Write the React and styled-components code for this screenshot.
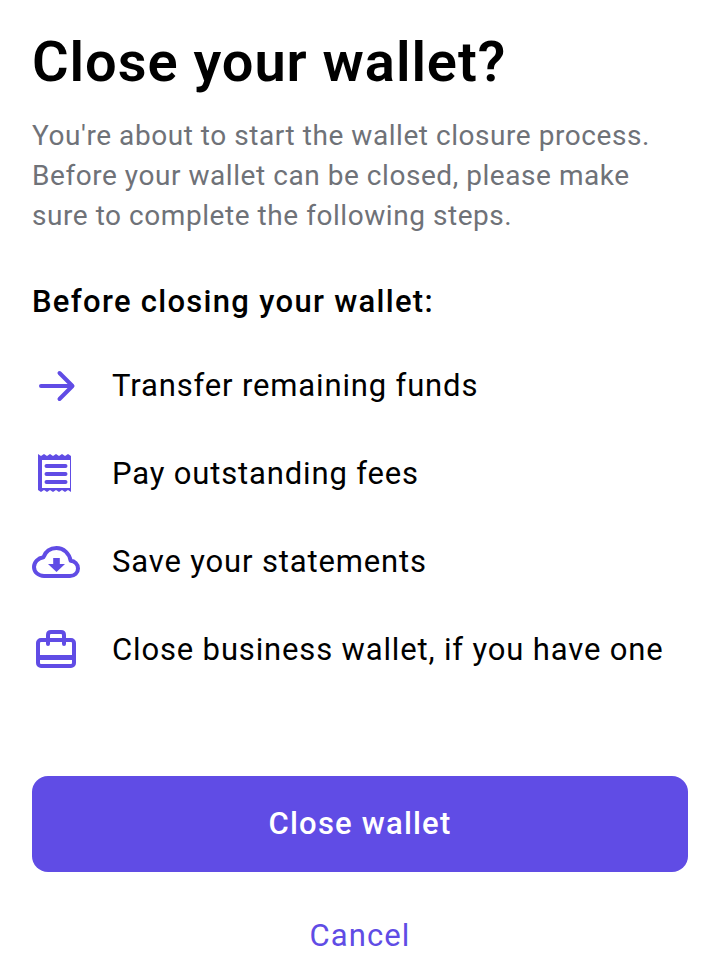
import React from 'react';
import styled, { createGlobalStyle } from 'styled-components';

const GlobalStyle = createGlobalStyle`
  html, body {
    background: #fff;
    margin: 0;
    padding: 0;
  }
  body {
    font-family: Roboto, "Liberation Sans", sans-serif;
  }
`;

const Page = styled.main`
  box-sizing: border-box;
  color: #000;
  display: flex;
  flex-direction: column;
  height: 969px;
  overflow: hidden;
  padding: 24px 32px 0;
  width: 720px;
`;

const Title = styled.h1`
  font-size: 56px;
  font-weight: 600;
  letter-spacing: 0.95px;
  line-height: 76px;
  margin: 0 0 16px;
`;

const Intro = styled.p`
  color: #6f7278;
  font-size: 28px;
  letter-spacing: 0.55px;
  line-height: 40px;
  margin: 0 0 46px;
`;

const Subtitle = styled.h2`
  font-size: 31px;
  font-weight: 500;
  letter-spacing: 1.3px;
  line-height: 40px;
  margin: 0 0 39px;
`;

const Steps = styled.ul`
  display: flex;
  flex-direction: column;
  gap: 40px;
  list-style: none;
  margin: 0 0 103px;
  padding: 0;
`;

const Step = styled.li`
  align-items: center;
  display: flex;
  font-size: 31px;
  gap: 32px;
  height: 48px;
  letter-spacing: 0.85px;
`;

const Icon = styled.svg.attrs({ viewBox: '0 0 48 48', fill: 'none' })`
  color: #604ce5;
  flex: none;
  height: 48px;
  width: 48px;
`;

const PrimaryButton = styled.button`
  background: #604ce5;
  border: 0;
  border-radius: 16px;
  color: #fff;
  font-family: inherit;
  font-size: 31px;
  font-weight: 500;
  height: 96px;
  letter-spacing: 1.2px;
  padding: 0 0 2px;
  width: 100%;
`;

const CancelButton = styled.button`
  background: none;
  border: 0;
  color: #604ce5;
  font-family: inherit;
  font-size: 31px;
  height: 40px;
  letter-spacing: 1.1px;
  margin-top: 43px;
  padding: 0;
`;

const ArrowIcon = () => (
  <Icon>
    <path
      d="M9 25h31M27.500 12l13 13-13 13"
      stroke="currentColor"
      strokeWidth="4"
      strokeLinecap="round"
      strokeLinejoin="round"
    />
  </Icon>
);

const ReceiptIcon = () => (
  <Icon>
    <path
      fillRule="evenodd"
      fill="currentColor"
      d="M6 5l3 2 3-2 3 2 3-2 3 2 3-2 3 2 3-2 3 2 3-2 3 2v36l-3-2-3 2-3-2-3 2-3-2-3 2-3-2-3 2-3-2-3 2-3-2V5zM10 11v28h28V11H10z"
    />
    <path
      d="M14.500 17h19M14.500 25h19M14.500 33h19"
      stroke="currentColor"
      strokeWidth="4"
      strokeLinecap="round"
    />
  </Icon>
);

const CloudIcon = () => (
  <Icon>
    <path
      d="M12 39h26c4.500 0 8-3.200 8-7.600 0-4.200-3.300-7.400-7.400-7.600C37.400 16.400 31.600 11 24.500 11c-6.200 0-11 3.600-13 9.200C6 21 2 25 2 30c0 5 4.400 9 10 9z"
      stroke="currentColor"
      strokeWidth="4"
      strokeLinejoin="round"
    />
    <path
      fill="currentColor"
      d="M21.200 21h6.600v6H33l-8.500 8-8.500-8h5.200v-6z"
    />
  </Icon>
);

const BriefcaseIcon = () => (
  <Icon>
    <rect x="6" y="15" width="36" height="26" rx="3" stroke="currentColor" strokeWidth="4" />
    <path d="M5 32.500h38" stroke="currentColor" strokeWidth="5" />
    <path
      d="M16 19v-9c0-1.800 1.200-3 3-3h10c1.800 0 3 1.200 3 3v9"
      stroke="currentColor"
      strokeWidth="4"
      strokeLinecap="round"
    />
  </Icon>
);

const steps = [
  { icon: ArrowIcon, label: 'Transfer remaining funds' },
  { icon: ReceiptIcon, label: 'Pay outstanding fees' },
  { icon: CloudIcon, label: 'Save your statements' },
  { icon: BriefcaseIcon, label: 'Close business wallet, if you have one' },
];

const App = () => (
  <Page>
    <GlobalStyle />
    <Title>Close your wallet?</Title>
    <Intro>
      You're about to start the wallet closure process.
      <br />
      Before your wallet can be closed, please make
      <br />
      sure to complete the following steps.
    </Intro>
    <Subtitle>Before closing your wallet:</Subtitle>
    <Steps>
      {steps.map(({ icon: StepIcon, label }) => (
        <Step key={label}>
          <StepIcon />
          {label}
        </Step>
      ))}
    </Steps>
    <PrimaryButton>Close wallet</PrimaryButton>
    <CancelButton>Cancel</CancelButton>
  </Page>
);

export default App;
